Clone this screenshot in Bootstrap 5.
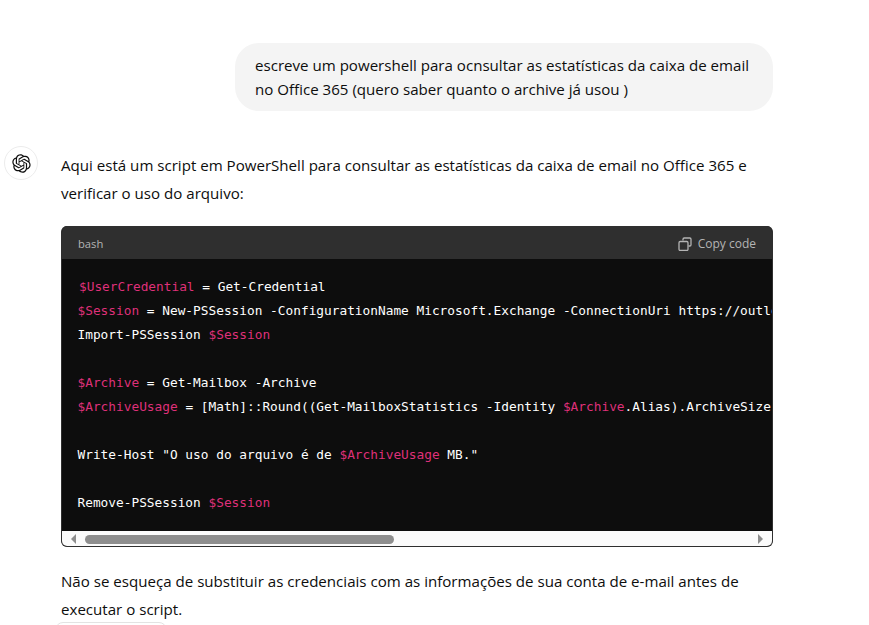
<!DOCTYPE html>
<html lang="pt">
<head>
<meta charset="utf-8">
<title>Chat</title>
<link href="https://cdn.jsdelivr.net/npm/bootstrap@5.3.0/dist/css/bootstrap.min.css" rel="stylesheet">
<style>
html,body{height:625px;overflow:hidden;background:#fff}
body{font-family:"Open Sans","Noto Sans",sans-serif;font-size:15.1px;color:#0d0d0d;line-height:28px}
.chat-page{padding:43px 96px 0 4px}
.user-bubble{width:538px;background:#f4f4f4;border-radius:24px;padding:10px 20px;line-height:24px;margin-bottom:35px}
.bot-avatar{width:34px;height:34px;border:1px solid #ececec;border-radius:50%;flex:none;margin-right:23px}
.bot-body{min-width:0;flex:1;padding-top:5px}
.bot-body p{margin:0}
.code-box{margin-top:19px;margin-bottom:20px;border-radius:6px;background:#0d0d0d;overflow:hidden;border:solid #2f2f2f;border-width:0 1px 1px 1px;height:321px}
.code-head{height:33px;background:#2f2f2f;color:#b4b4b4;font-size:12px;padding:2px 16px 0 16px;line-height:30px}
.code-lang{font-size:11.2px}
.code-copy{gap:6px}
.code-text{height:272px;padding:16px 0 0 15.5px;overflow:hidden;white-space:pre;font-family:"DejaVu Sans Mono","Liberation Mono",monospace;font-size:12.8px;line-height:24px;color:#fff}
.code-text b{font-weight:400;color:#df3079}
.nudge{margin-left:1.5px}
.fake-scroll{height:15px;background:#fbfbfb;padding:1px 0 0}
.arrow-l,.arrow-r{width:0;height:0;border-style:solid;border-color:transparent}
.arrow-l{border-width:5px 5px 5px 0;border-right-color:#8e8e8e;margin:0 9px 0 9px}
.arrow-r{border-width:5px 0 5px 5px;border-left-color:#8e8e8e;margin:0 9px 0 auto}
.thumb{width:309px;height:9px;background:#8e8e8e;border-radius:5px}
.pill-tail{width:112px;height:20px;margin:-1px 0 0 -6px;border:1px solid #e3e3e3;border-radius:8px}
</style>
</head>
<body>
<main class="chat-page">
  <div class="d-flex justify-content-end">
    <div class="user-bubble">escreve um powershell para ocnsultar as estatísticas da caixa de email no Office 365 (quero saber quanto o archive já usou )</div>
  </div>
  <div class="d-flex align-items-start">
    <div class="bot-avatar d-flex align-items-center justify-content-center">
      <svg width="19" height="19" viewBox="0 0 41 41" fill="#0d0d0d" aria-hidden="true"><path d="M37.5324 16.8707C37.9808 15.5241 38.1363 14.0974 37.9886 12.6859C37.8409 11.2744 37.3934 9.91076 36.676 8.68622C35.6126 6.83404 33.9882 5.3676 32.0373 4.4985C30.0864 3.62941 27.9098 3.40259 25.8215 3.85078C24.8796 2.7893 23.7219 1.94125 22.4257 1.36341C21.1295 0.785575 19.7249 0.491269 18.3058 0.500197C16.1708 0.495044 14.0893 1.16803 12.3614 2.42214C10.6335 3.67624 9.34853 5.44666 8.6917 7.47815C7.30085 7.76286 5.98686 8.3414 4.8377 9.17505C3.68854 10.0087 2.73073 11.0782 2.02839 12.312C0.956464 14.1591 0.498905 16.2988 0.721698 18.4228C0.944492 20.5467 1.83612 22.5449 3.268 24.1293C2.81966 25.4759 2.66413 26.9026 2.81182 28.3141C2.95951 29.7256 3.40701 31.0892 4.12437 32.3138C5.18791 34.1659 6.8123 35.6322 8.76321 36.5013C10.7141 37.3704 12.8907 37.5973 14.9789 37.1492C15.9208 38.2107 17.0786 39.0587 18.3747 39.6366C19.6709 40.2144 21.0755 40.5087 22.4946 40.4998C24.6307 40.5054 26.7133 39.8321 28.4418 38.5772C30.1704 37.3223 31.4556 35.5506 32.1119 33.5179C33.5027 33.2332 34.8167 32.6547 35.9659 31.821C37.115 30.9874 38.0728 29.9178 38.7752 28.684C39.8458 26.8371 40.3023 24.6979 40.0789 22.5748C39.8556 20.4517 38.9639 18.4544 37.5324 16.8707ZM22.4978 37.8849C20.7443 37.8874 19.0459 37.2733 17.6994 36.1501C17.7601 36.117 17.8666 36.0586 17.936 36.0161L25.9004 31.4156C26.1003 31.3019 26.2663 31.137 26.3813 30.9378C26.4964 30.7386 26.5563 30.5124 26.5549 30.2825V19.0542L29.9213 20.998C29.9389 21.0068 29.9541 21.0198 29.9656 21.0359C29.977 21.052 29.9842 21.0707 29.9867 21.0902V30.3889C29.9842 32.375 29.1946 34.2791 27.7909 35.6841C26.3872 37.0892 24.4838 37.8806 22.4978 37.8849ZM6.39227 31.0064C5.51397 29.4888 5.19742 27.7107 5.49804 25.9832C5.55718 26.0187 5.66048 26.0818 5.73461 26.1244L13.699 30.7248C13.8975 30.8408 14.1233 30.902 14.3532 30.902C14.583 30.902 14.8088 30.8408 15.0073 30.7248L24.731 25.1103V28.9979C24.7321 29.0177 24.7283 29.0376 24.7199 29.0556C24.7115 29.0736 24.6988 29.0893 24.6829 29.1012L16.6317 33.7497C14.9096 34.7416 12.8643 35.0097 10.9447 34.4954C9.02506 33.9811 7.38785 32.7263 6.39227 31.0064ZM4.29707 13.6194C5.17156 12.0998 6.55279 10.9364 8.19885 10.3327C8.19885 10.4013 8.19491 10.5228 8.19491 10.6071V19.808C8.19351 20.0378 8.25334 20.2638 8.36823 20.4629C8.48312 20.6619 8.64893 20.8267 8.84863 20.9404L18.5723 26.5542L15.206 28.4979C15.1894 28.5089 15.1703 28.5155 15.1505 28.5173C15.1307 28.5191 15.1107 28.516 15.0924 28.5082L7.04046 23.8557C5.32135 22.8601 4.06716 21.2235 3.55289 19.3046C3.03862 17.3858 3.30624 15.3413 4.29707 13.6194ZM31.955 20.0556L22.2312 14.4411L25.5976 12.4981C25.6142 12.4872 25.6333 12.4805 25.6531 12.4787C25.6729 12.4769 25.6928 12.4801 25.7111 12.4879L33.7631 17.1364C34.9967 17.849 36.0017 18.8982 36.6606 20.1613C37.3194 21.4244 37.6047 22.849 37.4832 24.2684C37.3617 25.6878 36.8382 27.0432 35.9743 28.1759C35.1103 29.3086 33.9415 30.1717 32.6047 30.6641C32.6047 30.5947 32.6047 30.4733 32.6047 30.3889V21.188C32.6066 20.9586 32.5474 20.7328 32.4332 20.5338C32.319 20.3348 32.154 20.1698 31.955 20.0556ZM35.3055 15.0128C35.2464 14.9765 35.1431 14.9142 35.069 14.8717L27.1045 10.2712C26.906 10.1554 26.6803 10.0943 26.4504 10.0943C26.2206 10.0943 25.9948 10.1554 25.7963 10.2712L16.0726 15.8858V11.9982C16.0715 11.9783 16.0753 11.9585 16.0837 11.9405C16.0921 11.9225 16.1048 11.9068 16.1207 11.8949L24.1719 7.25025C25.4053 6.53903 26.8158 6.19376 28.2383 6.25482C29.6608 6.31589 31.0364 6.78077 32.2044 7.59508C33.3723 8.40939 34.2842 9.53945 34.8334 10.8531C35.3826 12.1667 35.5464 13.6095 35.3055 15.0128ZM14.2424 21.9419L10.8752 19.9981C10.8576 19.9893 10.8423 19.9763 10.8309 19.9602C10.8195 19.9441 10.8122 19.9254 10.8098 19.9058V10.6071C10.8107 9.18295 11.2173 7.78848 11.9819 6.58696C12.7466 5.38544 13.8377 4.42659 15.1275 3.82264C16.4173 3.21869 17.8524 2.99464 19.2649 3.1767C20.6775 3.35876 22.0089 3.93941 23.1034 4.85067C23.0427 4.88379 22.937 4.94215 22.8668 4.98473L14.9024 9.58517C14.7025 9.69878 14.5366 9.86356 14.4215 10.0626C14.3065 10.2616 14.2466 10.4877 14.2479 10.7175L14.2424 21.9419ZM16.071 17.9991L20.4018 15.4978L24.7325 17.9975V22.9985L20.4018 25.4983L16.071 22.9985V17.9991Z"/></svg>
    </div>
    <div class="bot-body">
      <p>Aqui está um script em PowerShell para consultar as estatísticas da caixa de email no Office 365 e verificar o uso do arquivo:</p>
      <div class="code-box">
        <div class="code-head d-flex justify-content-between align-items-center">
          <span class="code-lang">bash</span>
          <span class="code-copy d-flex align-items-center">
            <svg width="14" height="14" viewBox="0 0 14 14" fill="none" stroke="#b4b4b4" stroke-width="1.3" aria-hidden="true"><path d="M5 3.5V2.2A1.2 1.2 0 0 1 6.2 1h5.6A1.2 1.2 0 0 1 13 2.2v5.6A1.2 1.2 0 0 1 11.8 9H10.5"/><rect x="1" y="4.5" width="9" height="9" rx="1.2"/></svg>
            Copy code
          </span>
        </div>
        <div class="code-text"><b class="nudge">$UserCredential</b> = Get-Credential
<b>$Session</b> = New-PSSession -ConfigurationName Microsoft.Exchange -ConnectionUri https://outlook.office365.com/powershell-liveid/
Import-PSSession <b>$Session</b>

<b>$Archive</b> = Get-Mailbox -Archive
<b>$ArchiveUsage</b> = [Math]::Round((Get-MailboxStatistics -Identity <b>$Archive</b>.Alias).ArchiveSize.Value.ToMB())

Write-Host "O uso do arquivo é de <b>$ArchiveUsage</b> MB."

Remove-PSSession <b>$Session</b></div>
        <div class="fake-scroll d-flex align-items-center">
          <span class="arrow-l"></span><span class="thumb"></span><span class="arrow-r"></span>
        </div>
      </div>
      <p>Não se esqueça de substituir as credenciais com as informações de sua conta de e-mail antes de executar o script.</p>
      <div class="pill-tail"></div>
    </div>
  </div>
</main>
</body>
</html>
